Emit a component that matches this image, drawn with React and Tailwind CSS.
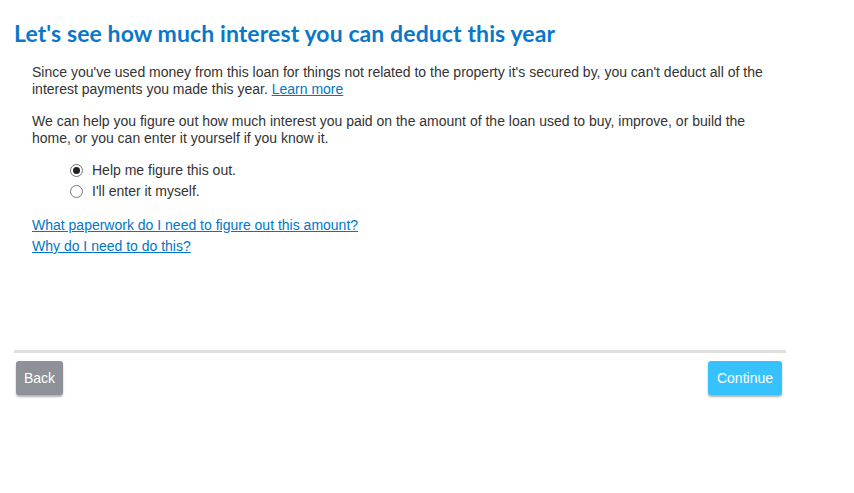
import { useState } from "react";

function Radio({ checked, label, onClick }) {
  return (
    <label className="flex items-center gap-[9px] cursor-pointer h-[21px] shrink-0" onClick={onClick}>
      <span className="w-[13px] h-[13px] rounded-full border border-[#767676] bg-white flex items-center justify-center">
        {checked && <span className="w-[7px] h-[7px] rounded-full bg-[#222]" />}
      </span>
      <span>{label}</span>
    </label>
  );
}

export default function App() {
  const [choice, setChoice] = useState("help");

  return (
    <div className="w-[854px] h-[493px] bg-white font-['Liberation_Sans',Arial,sans-serif] text-[14px] text-[#333]">
      <div className="w-[772px] ml-[14px] pt-[19px]">
        {/* header */}
        <h1 className="font-['Lato',sans-serif] font-bold text-[23px] leading-[28px] tracking-[0.1px] text-[#0a77c9]">
          Let's see how much interest you can deduct this year
        </h1>

        <div className="pl-[18px] pr-[14px] mt-[17px] leading-[17px]">
          <p>
            Since you've used money from this loan for things not related to the property it's secured by, you can't deduct all of the interest payments you made this year.{" "}
            <a href="#" className="text-[#0077c5] underline">Learn more</a>
          </p>
          <p className="mt-[15px]">
            We can help you figure out how much interest you paid on the amount of the loan used to buy, improve, or build the home, or you can enter it yourself if you know it.
          </p>

          <div className="mt-[13px] pl-[38px] flex flex-col">
            <Radio checked={choice === "help"} label="Help me figure this out." onClick={() => setChoice("help")} />
            <Radio checked={choice === "self"} label="I'll enter it myself." onClick={() => setChoice("self")} />
          </div>

          <div className="mt-[13px] flex flex-col leading-[21px]">
            <a href="#" className="text-[#0077c5] underline self-start">What paperwork do I need to figure out this amount?</a>
            <a href="#" className="text-[#0077c5] underline self-start">Why do I need to do this?</a>
          </div>
        </div>

        {/* footer */}
        <div className="mt-[93px] border-t-[3px] border-[#e0e0e0] pt-[8px] flex justify-between px-[2px]">
          <button className="h-[34px] px-[8px] rounded-[3px] bg-[#8e9198] text-white shadow-[0_2px_2px_rgba(0,0,0,0.3)]">
            Back
          </button>
          <button className="h-[34px] px-[9px] rounded-[3px] bg-[#36c1ff] text-white shadow-[0_2px_2px_rgba(0,0,0,0.3)] mr-[2px]">
            Continue
          </button>
        </div>
      </div>
    </div>
  );
}
